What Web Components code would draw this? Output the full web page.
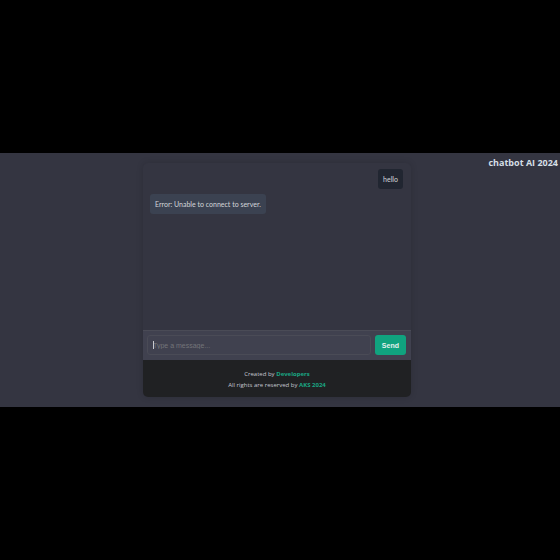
<!DOCTYPE html>
<html lang="en">
<head>
<meta charset="utf-8">
<meta name="viewport" content="width=device-width, initial-scale=1">
<title>chatbot AI 2024</title>
<style>
  body { margin: 0; background: #000; font-family: "Open Sans", "Noto Sans", sans-serif; }
</style>
</head>
<body>
<chat-page>
  <chat-window>
    <chat-message from="user">hello</chat-message>
    <chat-message from="bot">Error: Unable to connect to server.</chat-message>
    <chat-composer slot="composer"></chat-composer>
    <chat-footer slot="footer"></chat-footer>
  </chat-window>
  <span slot="title">chatbot AI 2024</span>
</chat-page>
<script>
  const define = (name, html) => {
    const template = document.createElement("template");
    template.innerHTML = html;
    customElements.define(name, class extends HTMLElement {
      constructor() {
        super();
        this.attachShadow({ mode: "open" }).append(template.content.cloneNode(true));
      }
    });
  };

  define("chat-page", `
    <style>
      :host { display: flex; flex-direction: column; justify-content: center; min-height: 100vh; }
      main {
        display: grid; grid-template-columns: 1fr 48% 1fr; align-items: start;
        padding: 10px 6px 10px 0; background: #343541;
      }
      .chat { grid-column: 2; min-width: 0; margin: 0 -1px; }
      h1 {
        grid-column: 3; margin: -6px -4px 0 0; text-align: right; white-space: nowrap;
        font-size: 9px; line-height: 12px; font-weight: 700; color: #d5dfe6;
      }
    </style>
    <main>
      <div class="chat"><slot></slot></div>
      <h1><slot name="title"></slot></h1>
    </main>`);

  define("chat-window", `
    <style>
      :host {
        display: flex; flex-direction: column; overflow: hidden;
        border-radius: 5px; background: #343541; box-shadow: 0 0 7px rgba(0, 0, 0, .14);
      }
      .log {
        display: flex; flex-direction: column; gap: 5px; box-sizing: border-box;
        min-height: 167px; padding: 6px 8px 6px 7px;
      }
    </style>
    <div class="log" role="log"><slot></slot></div>
    <slot name="composer"></slot>
    <slot name="footer"></slot>`);

  define("chat-message", `
    <style>
      :host {
        display: block; align-self: flex-start; padding: 5px; border-radius: 3px;
        background: #3b4251; color: #d4d6da; line-height: 10px;
        font-family: Lato, "Open Sans", sans-serif; font-size: 7px;
      }
      :host([from="user"]) { align-self: flex-end; background: #212631; }
    </style>
    <slot></slot>`);

  define("chat-composer", `
    <style>
      :host { display: block; border-top: 1px solid #4a4b56; background: #40414f; }
      form { display: flex; gap: 4px; padding: 4px 5px 5px 4px; }
      .field { position: relative; display: flex; flex: 1; min-width: 0; }
      input {
        flex: 1; min-width: 0; height: 20px; box-sizing: border-box; padding: 0 5px;
        border: 1px solid #4a4b56; border-radius: 3px; background: #40414f;
        color: #d4d6da; font: 7px "Liberation Sans", Arial, sans-serif; outline: none;
      }
      input::placeholder { color: #737479; opacity: 1; }
      .caret { position: absolute; left: 6px; top: 6px; width: 1px; height: 8px; background: #c8c9cd; }
      button {
        height: 20px; padding: 0 7px; border: 0; border-radius: 3px; background: #10a37f;
        color: #e4f1ee; font: 700 7px "Liberation Sans", Arial, sans-serif;
      }
    </style>
    <form onsubmit="return false">
      <div class="field">
        <input type="text" aria-label="Message" placeholder="Type a message...">
        <span class="caret"></span>
      </div>
      <button type="submit">Send</button>
    </form>`);

  define("chat-footer", `
    <style>
      :host {
        display: block; padding: 9px 8px 6px; background: #202123; color: #c5c6d0;
        font-size: 6px; line-height: 11px; text-align: center;
      }
      p { margin: 0; }
      a { color: #1aa582; font-weight: 700; text-decoration: none; }
    </style>
    <footer>
      <p>Created by <a href="#developers">Developers</a></p>
      <p>All rights are reserved by <a href="#aks">AKS 2024</a></p>
    </footer>`);
</script>
</body>
</html>
